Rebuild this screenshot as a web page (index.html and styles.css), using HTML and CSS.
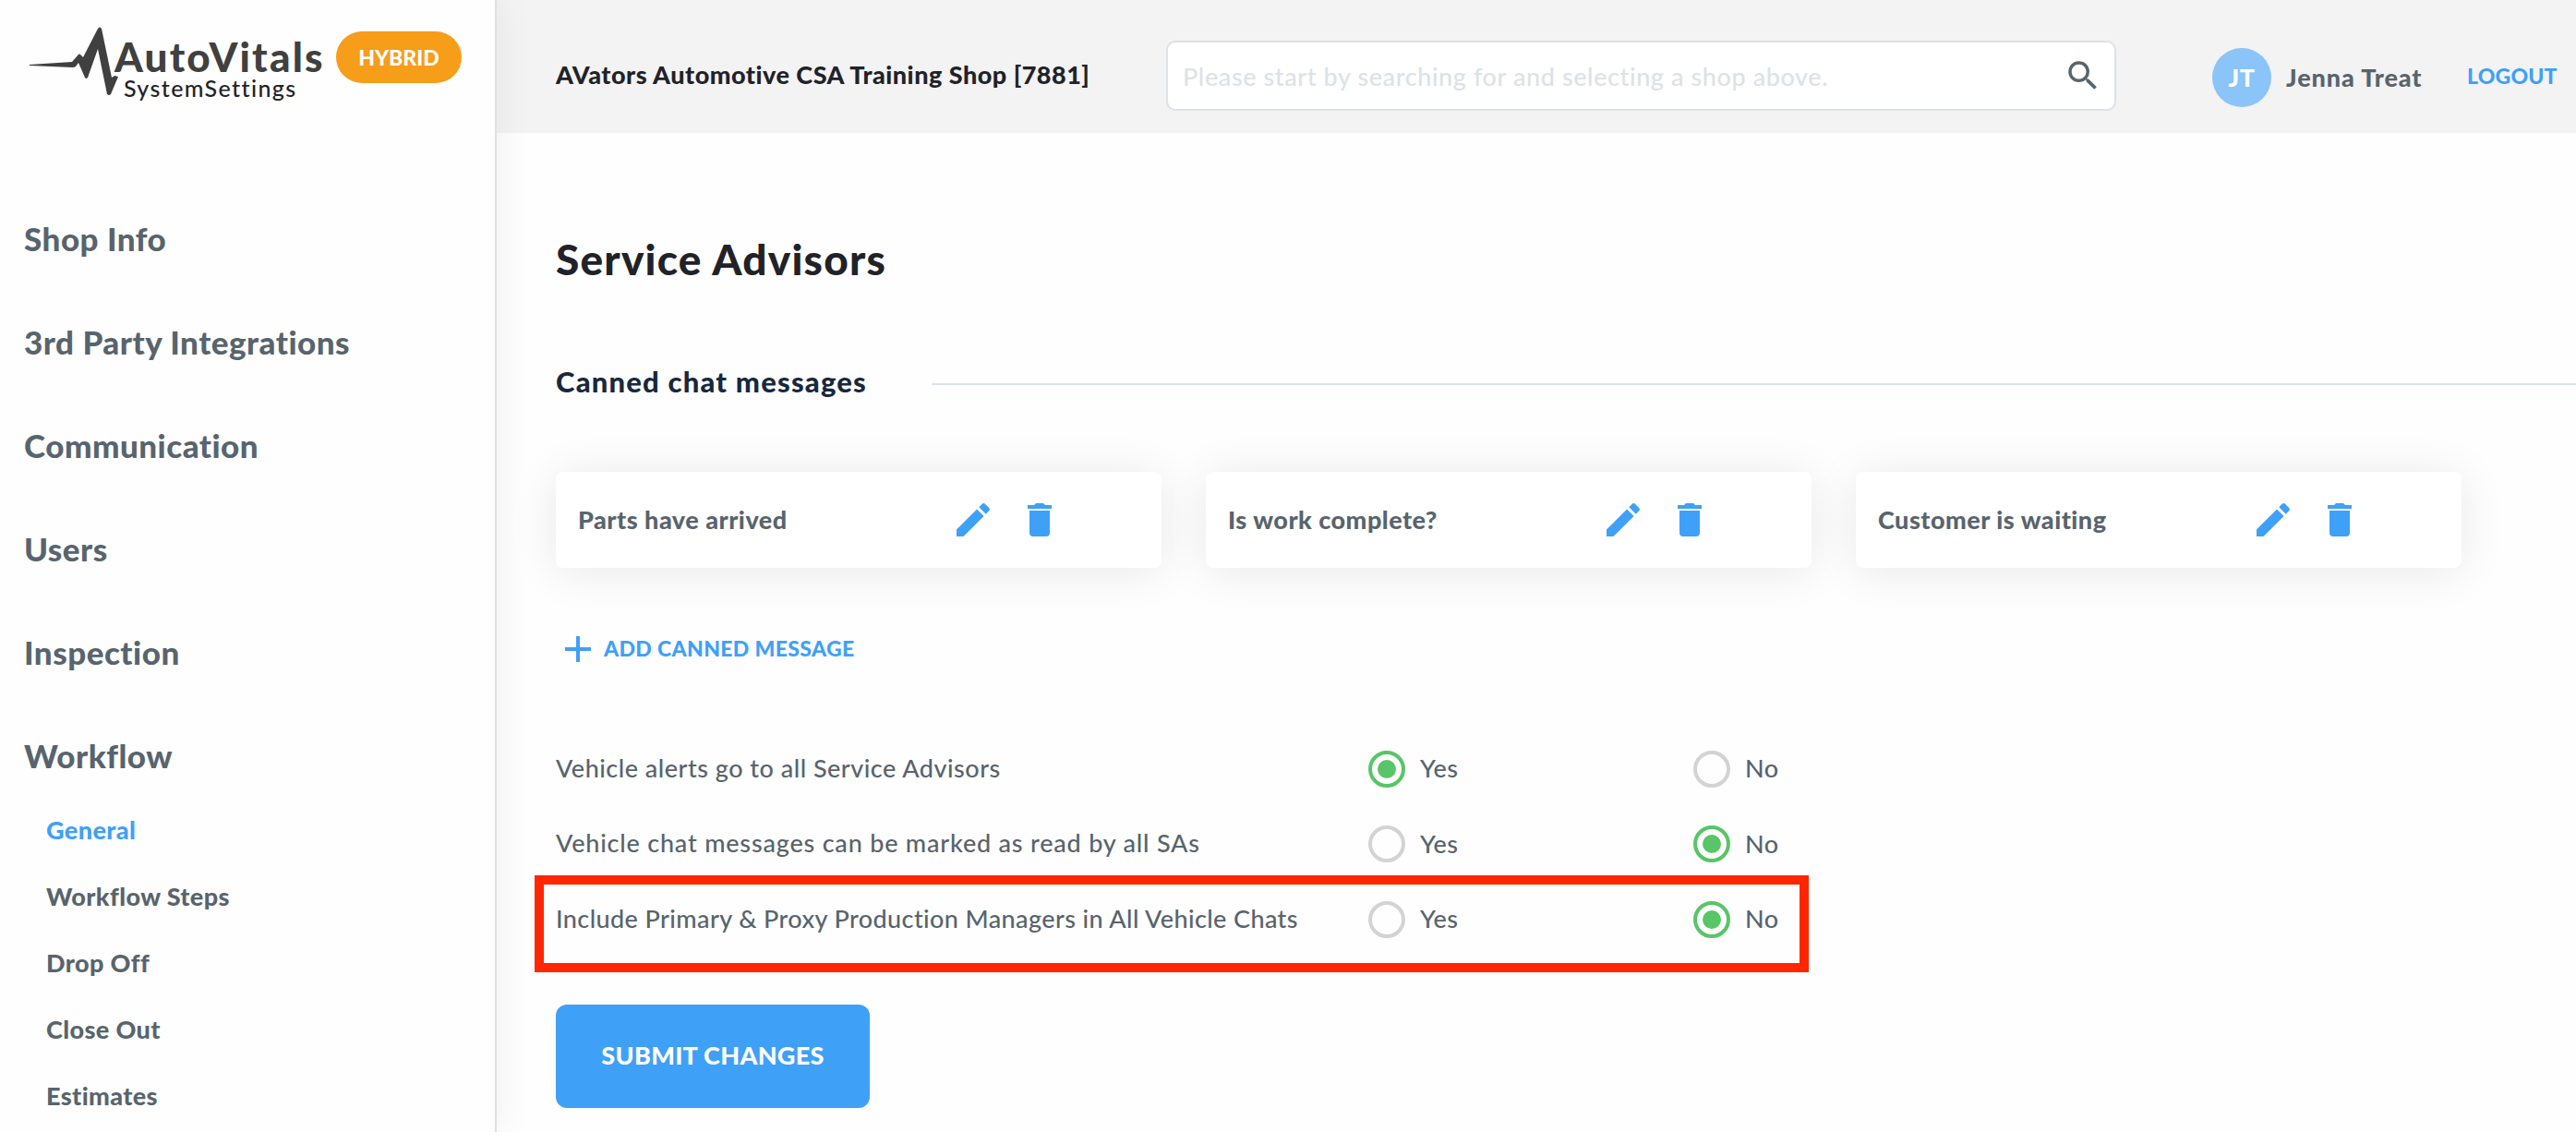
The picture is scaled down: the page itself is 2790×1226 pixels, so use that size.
FILE: index.html
```html
<!DOCTYPE html>
<html lang="en">
<head>
    <meta charset="UTF-8">
    <meta name="viewport" content="width=device-width, initial-scale=1.0">
    <title>AutoVitals System Settings</title>
    <link rel="stylesheet" href="styles.css">
</head>
<body>

    <!-- Icons used more than once -->
    <svg class="icon-defs" width="0" height="0">
        <symbol id="icon-edit" viewBox="0 0 24 24">
            <path d="M3 17.25V21h3.75L17.81 9.94l-3.75-3.75L3 17.25zM20.71 7.04a1 1 0 0 0 0-1.41l-2.34-2.34a1 1 0 0 0-1.41 0l-1.83 1.83 3.75 3.75 1.83-1.83z"/>
        </symbol>
        <symbol id="icon-delete" viewBox="0 0 26 36">
            <path d="M0 2h7l2-2h8l2 2h7v4H0zM2 8h22v24a4 4 0 0 1-4 4H6a4 4 0 0 1-4-4z"/>
        </symbol>
    </svg>

    <div class="app">
        <aside class="sidebar">
            <div class="brand">
                <svg class="pulse" width="93" height="75" viewBox="31 29 93 75">
                    <path d="M32 70l46-3 7-8q1-1 2 0l3 3 16-31q2-3 4 0l11 53 3-2 4 1-8 19q-2 2-4 0l-10-49-11 31q-2 2-3 0l-7-16-3 4q-1 1-4 1l-46-2q-1-.5 0-1z"/>
                </svg>
                <div class="brand-text">
                    <div class="brand-name">AutoVitals</div>
                    <div class="brand-sub">SystemSettings</div>
                </div>
                <span class="badge">HYBRID</span>
            </div>

            <ul class="nav">
                <li>Shop Info</li>
                <li>3rd Party Integrations</li>
                <li>Communication</li>
                <li>Users</li>
                <li>Inspection</li>
                <li>Workflow</li>
            </ul>
            <ul class="subnav">
                <li class="active">General</li>
                <li>Workflow Steps</li>
                <li>Drop Off</li>
                <li>Close Out</li>
                <li>Estimates</li>
            </ul>
        </aside>

        <div class="main">
            <header class="topbar">
                <div class="shop-name">AVators Automotive CSA Training Shop [7881]</div>
                <div class="search">
                    <span class="placeholder">Please start by searching for and selecting a shop above.</span>
                    <svg class="search-icon" width="42" height="42" viewBox="0 0 24 24">
                        <path d="M15.5 14h-.79l-.28-.27A6.47 6.47 0 0 0 16 9.5 6.5 6.5 0 1 0 9.5 16c1.61 0 3.09-.59 4.23-1.57l.27.28v.79l5 4.99L20.49 19l-4.99-5zm-6 0C7.01 14 5 11.99 5 9.5S7.01 5 9.5 5 14 7.01 14 9.5 11.99 14 9.5 14z"/>
                    </svg>
                </div>
                <div class="avatar">JT</div>
                <div class="user-name">Jenna Treat</div>
                <a class="logout">LOGOUT</a>
            </header>

            <main class="content">
                <h1>Service Advisors</h1>

                <div class="section-title">
                    <h2>Canned chat messages</h2>
                    <div class="line"></div>
                </div>

                <div class="cards">
                    <div class="card">
                        <span class="message">Parts have arrived</span>
                        <svg class="edit"><use href="#icon-edit"/></svg>
                        <svg class="delete"><use href="#icon-delete"/></svg>
                    </div>
                    <div class="card">
                        <span class="message">Is work complete?</span>
                        <svg class="edit"><use href="#icon-edit"/></svg>
                        <svg class="delete"><use href="#icon-delete"/></svg>
                    </div>
                    <div class="card">
                        <span class="message">Customer is waiting</span>
                        <svg class="edit"><use href="#icon-edit"/></svg>
                        <svg class="delete"><use href="#icon-delete"/></svg>
                    </div>
                </div>

                <div class="add">
                    <svg width="28" height="28" viewBox="0 0 28 28"><path d="M12 0h4v12h12v4H16v12h-4V16H0v-4h12z"/></svg>
                    <span>ADD CANNED MESSAGE</span>
                </div>

                <div class="options">
                    <div class="option">
                        <span class="label">Vehicle alerts go to all Service Advisors</span>
                        <span class="choice"><i class="radio checked"></i><span>Yes</span></span>
                        <span class="choice"><i class="radio"></i><span>No</span></span>
                    </div>
                    <div class="option">
                        <span class="label label-wide">Vehicle chat messages can be marked as read by all SAs</span>
                        <span class="choice"><i class="radio"></i><span>Yes</span></span>
                        <span class="choice"><i class="radio checked"></i><span>No</span></span>
                    </div>
                    <div class="option">
                        <span class="label label-tight">Include Primary &amp; Proxy Production Managers in All Vehicle Chats</span>
                        <span class="choice"><i class="radio"></i><span>Yes</span></span>
                        <span class="choice"><i class="radio checked"></i><span>No</span></span>
                        <div class="highlight"></div>
                    </div>
                </div>

                <button class="submit">SUBMIT CHANGES</button>
            </main>
        </div>
    </div>

</body>
</html>
```
FILE: styles.css
```css
* {
    box-sizing: border-box;
}

body {
    margin: 0;
    font-family: Lato, "Open Sans", sans-serif;
    font-size: 27px;
    font-weight: 500;
    letter-spacing: 0.5px;
    color: #58646d;
    background: #fefefe;
    overflow: hidden;
}

h1, h2, ul {
    margin: 0;
    padding: 0;
}

ul {
    list-style: none;
}

.icon-defs {
    position: absolute;
}

.app {
    display: flex;
    height: 100vh;
}

/* Sidebar */
.sidebar {
    position: relative;
    z-index: 1;
    flex: none;
    width: 538px;
    background: #fefefe;
    border-right: 2px solid #dfe0e1;
    box-shadow: 0 0 40px rgba(0, 0, 0, 0.07);
    font-weight: 900;
}

.brand {
    display: flex;
    align-items: flex-start;
    height: 238px;
    padding: 29px 0 0 31px;
}

.pulse {
    flex: none;
    overflow: visible;
    fill: #404040;
}

.brand-text {
    width: 240px;
    padding-top: 10px;
    white-space: nowrap;
}

.brand-name {
    font-size: 44px;
    line-height: 44px;
    letter-spacing: 2.2px;
    color: #404040;
}

.brand-sub {
    margin-left: 10px;
    font-size: 25px;
    font-weight: 500;
    line-height: 24px;
    letter-spacing: 1.4px;
    color: #212229;
}

.badge {
    width: 136px;
    height: 56px;
    margin-top: 5px;
    border-radius: 28px;
    background: #f69d1a;
    color: #fff;
    font-size: 23px;
    line-height: 56px;
    letter-spacing: 0;
    text-align: center;
}

.nav li {
    padding-left: 26px;
    margin-bottom: 72px;
    font-size: 35px;
    line-height: 40px;
}

.nav li:last-child {
    margin-bottom: 25px;
}

.subnav li {
    padding-left: 50px;
    line-height: 72px;
    letter-spacing: 0.4px;
}

.subnav .active {
    color: #3fa0f7;
}

/* Top bar */
.main {
    flex: 1;
    min-width: 0;
}

.topbar {
    display: flex;
    align-items: center;
    height: 144px;
    padding-left: 64px;
    background: #f3f3f3;
    font-weight: 900;
    white-space: nowrap;
}

.shop-name {
    width: 661px;
    margin-top: 18px;
    line-height: 36px;
    color: #212229;
}

.search {
    display: flex;
    align-items: center;
    justify-content: space-between;
    width: 1029px;
    height: 76px;
    margin-top: 20px;
    padding: 0 13px 0 16px;
    border: 2px solid #dce2e6;
    border-radius: 10px;
    background: #fff;
    color: #dce2e6;
    font-weight: 500;
    letter-spacing: 0.6px;
}

.search-icon {
    fill: #58646d;
}

.avatar {
    width: 64px;
    height: 64px;
    margin: 24px 16px 0 104px;
    border-radius: 50%;
    background: #8bc4f9;
    color: #fff;
    line-height: 64px;
    text-align: center;
}

.user-name {
    width: 196px;
    margin-top: 22px;
    letter-spacing: 0.9px;
}

.logout {
    margin-top: 20px;
    color: #3fa0f7;
    font-size: 23px;
    letter-spacing: 0.2px;
}

/* Page content */
.content {
    padding: 110px 0 0 64px;
}

h1 {
    font-size: 46px;
    font-weight: 900;
    line-height: 54px;
    letter-spacing: 1.2px;
    color: #212229;
}

.section-title {
    display: flex;
    align-items: center;
    height: 36px;
    margin-top: 87px;
}

h2 {
    width: 407px;
    font-size: 31px;
    font-weight: 900;
    line-height: 36px;
    letter-spacing: 1.2px;
    color: #17283d;
}

.line {
    flex: 1;
    height: 2px;
    margin-top: 6px;
    background: #dce2e6;
}

.cards {
    display: flex;
    gap: 48px;
    margin-top: 80px;
}

.card {
    display: flex;
    align-items: center;
    width: 656px;
    height: 104px;
    padding-left: 24px;
    border-radius: 8px;
    background: #fff;
    box-shadow: 0 4px 50px rgba(0, 0, 0, 0.09);
    font-weight: 900;
}

.message {
    width: 404px;
    padding-bottom: 1px;
}

.edit {
    width: 48px;
    height: 48px;
    margin-right: 35px;
    fill: #3fa0f7;
}

.delete {
    width: 26px;
    height: 36px;
    fill: #3fa0f7;
}

.add {
    display: flex;
    align-items: center;
    gap: 14px;
    height: 40px;
    margin-top: 68px;
    padding-left: 10px;
    color: #3fa0f7;
    fill: #3fa0f7;
    font-size: 23px;
    font-weight: 900;
    letter-spacing: 0.35px;
}

.add span {
    padding-bottom: 3px;
}

.options {
    margin-top: 69px;
}

.option {
    position: relative;
    display: flex;
    align-items: center;
    height: 81.5px;
    white-space: nowrap;
}

.label {
    width: 880px;
    padding-bottom: 3px;
}

.label-wide {
    letter-spacing: 0.8px;
}

.label-tight {
    letter-spacing: 0.4px;
}

.choice {
    display: flex;
    align-items: center;
    gap: 16px;
    width: 352px;
}

.choice span {
    padding-bottom: 2px;
}

.radio {
    display: flex;
    width: 40px;
    height: 40px;
    border: 4px solid #d3d3d3;
    border-radius: 50%;
}

.radio.checked {
    border-color: #58c568;
}

.radio.checked::after {
    content: "";
    width: 20px;
    height: 20px;
    margin: auto;
    border-radius: 50%;
    background: #58c568;
}

/* Red frame around the last option */
.highlight {
    position: absolute;
    top: -7px;
    left: -23px;
    width: 1380px;
    height: 105px;
    border: 10px solid #ff2600;
}

.submit {
    display: block;
    width: 340px;
    height: 112px;
    margin-top: 51px;
    padding: 0 0 2px;
    border: none;
    border-radius: 12px;
    background: #3fa0f7;
    color: #fff;
    font-family: inherit;
    font-size: 27px;
    font-weight: 900;
    letter-spacing: 0.3px;
}
```
